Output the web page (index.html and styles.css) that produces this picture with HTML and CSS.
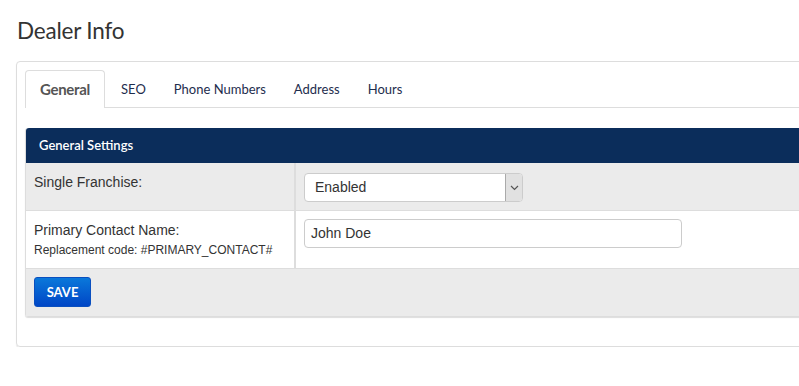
FILE: index.html
```html
<!DOCTYPE html>
<html>
<head>
<meta charset="utf-8">
<link rel="stylesheet" href="styles.css">
</head>
<body>
<h1 class="title">Dealer Info</h1>
<div class="panel">
  <ul class="tabs">
    <li class="tab active">General</li>
    <li class="tab">SEO</li>
    <li class="tab">Phone Numbers</li>
    <li class="tab">Address</li>
    <li class="tab">Hours</li>
  </ul>
  <div class="settings">
    <div class="settings-head">General Settings</div>
    <div class="row grey">
      <div class="label">Single Franchise:</div>
      <div class="field">
        <div class="select">
          <span class="select-value">Enabled</span>
          <span class="select-arrow">
            <svg width="9" height="6" viewBox="0 0 9 6"><path d="M1 1 L4.5 4.5 L8 1" fill="none" stroke="#555" stroke-width="1.2"/></svg>
          </span>
        </div>
      </div>
    </div>
    <div class="row">
      <div class="label">
        <div>Primary Contact Name:</div>
        <div class="hint">Replacement code: #PRIMARY_CONTACT#</div>
      </div>
      <div class="field field-input">
        <div class="input">John Doe</div>
      </div>
    </div>
    <div class="footer">
      <button class="btn-save">SAVE</button>
    </div>
  </div>
</div>
</body>
</html>
```
FILE: styles.css
```css
html, body {
  margin: 0;
  padding: 0;
  background: #fff;
  overflow: hidden;
}
body {
  padding-left: 16px;
  width: 900px;
}
.title {
  margin: 0;
  padding: 17px 0 0 1px;
  height: 61px;
  box-sizing: border-box;
  font-family: Lato, "Open Sans", sans-serif;
  font-weight: 400;
  font-size: 22.5px;
  letter-spacing: -0.2px;
  line-height: 28px;
  color: #333;
}
.panel {
  border: 1px solid #ddd;
  border-radius: 4px;
  box-shadow: 0 1px 1px #e4e4e4;
  padding: 8px 0 29px 8px;
  width: 860px;
}
.tabs {
  list-style: none;
  margin: 0;
  padding: 0;
  display: flex;
  border-bottom: 1px solid #ddd;
  height: 37px;
}
.tab {
  font-family: Lato, "Open Sans", sans-serif;
  font-size: 13px;
  color: #1e2d4d;
  padding: 0 13px;
  line-height: 37px;
  height: 37px;
  border: 1px solid transparent;
  border-bottom: none;
  box-sizing: content-box;
}
.tab.active {
  border-color: #ddd;
  border-radius: 4px 4px 0 0;
  background: #fff;
  color: #555;
  font-weight: 700;
  font-size: 15px;
  letter-spacing: -0.3px;
  height: 37px;
  padding: 0 14px;
  margin-bottom: -1px;
  margin-right: 2px;
}
.settings {
  margin-top: 20px;
  border: 1px solid #ddd;
  border-top: none;
  border-radius: 3px;
  box-shadow: 0 1px 1px #ddd;
}
.settings-head {
  background: #0b2d5b;
  color: #fff;
  font-family: Lato, "Open Sans", sans-serif;
  font-size: 13px;
  font-weight: 600;
  height: 35px;
  line-height: 35px;
  padding-left: 13px;
  border-radius: 3px 0 0 0;
}
.row {
  display: flex;
  border-bottom: 1px solid #ddd;
  background: #fff;
}
.row.grey {
  background: #ebebeb;
  height: 47px;
}
.label {
  width: 260px;
  padding: 9px 0 0 8px;
  border-right: 2px solid #ddd;
  font-family: "Liberation Sans", Arial, sans-serif;
  font-size: 14px;
  color: #333;
  line-height: 20px;
}
.hint {
  font-size: 12px;
  line-height: 18px;
  padding-top: 1px;
  padding-bottom: 9px;
}
.field {
  padding: 10px 0 0 8px;
}
.field-input {
  padding-top: 8px;
}
.select {
  display: flex;
  width: 217px;
  height: 27px;
  border: 1px solid #ccc;
  border-radius: 4px;
  background: #fff;
  overflow: hidden;
}
.select-value {
  flex: 1;
  padding-left: 10px;
  line-height: 27px;
  font-family: "Liberation Sans", Arial, sans-serif;
  font-size: 14px;
  color: #333;
}
.select-arrow {
  width: 16px;
  background: #e1e1e1;
  border-left: 1px solid #aaa;
  display: flex;
  align-items: center;
  justify-content: center;
}
.input {
  width: 370px;
  height: 27px;
  border: 1px solid #ccc;
  border-radius: 4px;
  background: #fff;
  padding-left: 6px;
  line-height: 27px;
  font-family: "Liberation Sans", Arial, sans-serif;
  font-size: 14px;
  color: #333;
}
.footer {
  background: #ebebeb;
  height: 47px;
  padding: 8px 0 0 8px;
  box-sizing: border-box;
}
.btn-save {
  width: 57px;
  height: 30px;
  border: 1px solid #0a4fbf;
  border-radius: 3px;
  background: linear-gradient(#0a78da, #0046c6);
  color: #fff;
  font-family: Lato, "Open Sans", sans-serif;
  font-size: 13px;
  font-weight: 700;
  padding: 0;
  cursor: pointer;
}
```
